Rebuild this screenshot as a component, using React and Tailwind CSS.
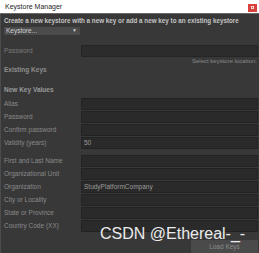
import React from 'react';

const Field = ({ label, value }) => (
  <div className="flex h-[13px] items-start">
    <span className="w-[77px] h-[12px] flex items-center text-[6.5px] text-[#8a8a8a] whitespace-nowrap">{label}</span>
    <div className="flex-1 h-[12px] bg-[#2a2a2a] border border-[#222] rounded-[1px] flex items-center px-[2px] text-[6.5px] text-[#9a9a9a]">
      {value}
    </div>
  </div>
);

export default function App() {
  const top = [
    ['Alias'],
    ['Password'],
    ['Confirm password'],
    ['Validity (years)', '50'],
  ];
  const dname = [
    ['First and Last Name'],
    ['Organizational Unit'],
    ['Organization', 'StudyPlatformCompany'],
    ['City or Locality'],
    ['State or Province'],
    ['Country Code (XX)'],
  ];

  return (
    <div className="relative w-[259px] h-[253px] overflow-hidden bg-[#383838] flex flex-col font-['Liberation_Sans',Arial,sans-serif]">
      <div className="h-[14px] bg-white flex items-center justify-between pl-[5px] pr-[2px] border-b border-[#6a6a6a]">
        <span className="text-[7px] text-[#1e1e1e] leading-none">Keystore Manager</span>
        <div className="w-[9px] h-[8px] mt-[2px] bg-[#d9413d] flex items-center justify-center">
          <div className="w-[3px] h-[3px] border border-white/80" />
        </div>
      </div>

      <div className="flex flex-col pl-[3px] pr-[1px] border-l border-[#4c4c4c] flex-1">
        <div className="mt-[3px] h-[8px] flex items-center text-[6.3px] font-bold text-[#c4c4c4] whitespace-nowrap">
          Create a new keystore with a new key or add a new key to an existing keystore
        </div>
        <div className="mt-[2px] w-[76px] h-[8px] bg-[#4b4b4b] rounded-[1px] flex items-center justify-between px-[2px] text-[6.5px] text-[#d0d0d0]">
          <span>Keystore...</span>
          <span className="text-[5px] text-[#c8c8c8] mr-[1px]">▼</span>
        </div>

        <div className="mt-[10px] flex h-[12px]">
          <span className="w-[77px] flex items-center text-[6.5px] text-[#7a7a7a]">Password</span>
          <div className="flex-1 bg-[#2c2c2c] border border-[#252525] rounded-[1px]" />
        </div>
        <div className="h-[8px] flex items-center justify-end text-[6px] text-[#8a8a8a] pr-[1px]">
          Select keystore location.
        </div>
        <div className="mt-[1px] h-[8px] flex items-center text-[6.5px] font-bold text-[#8e8e8e]">Existing Keys</div>
        <div className="mt-[12px] h-[8px] flex items-center text-[6.5px] font-bold text-[#9a9a9a]">New Key Values</div>

        <div className="mt-[4px] flex flex-col">
          {top.map(([l, v]) => (
            <Field key={l} label={l} value={v} />
          ))}
        </div>
        <div className="mt-[5px] flex flex-col">
          {dname.map(([l, v]) => (
            <Field key={l} label={l} value={v} />
          ))}
        </div>

        <div className="mt-[7px] flex justify-end">
          <div className="w-[67px] h-[13px] bg-[#4a4a4a] rounded-[1px] flex items-center justify-center text-[6.5px] text-[#8c8c8c]">
            Load Keys
          </div>
        </div>
      </div>

      <div className="absolute left-[100px] top-[226px] text-[16px] leading-none text-[#ececec] whitespace-nowrap">
        CSDN @Ethereal-_-
      </div>
    </div>
  );
}
